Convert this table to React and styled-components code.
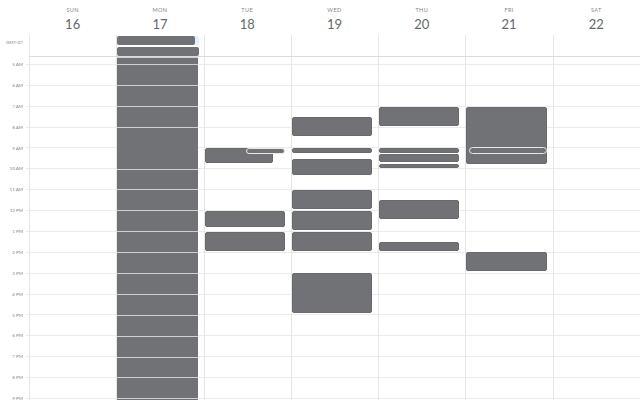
import React from 'react';
import styled, { createGlobalStyle } from 'styled-components';

const GlobalStyle = createGlobalStyle`
    html, body {
        margin: 0;
        padding: 0;
        background: #fff;
        font-family: Lato, "Liberation Sans", sans-serif;
    }
`;

const HOUR = 20.875;
const BODY_TOP = 57;
const FIRST_LINE = 7;

const days = [
    { name: 'SUN', date: 16 },
    { name: 'MON', date: 17 },
    { name: 'TUE', date: 18 },
    { name: 'WED', date: 19 },
    { name: 'THU', date: 20 },
    { name: 'FRI', date: 21 },
    { name: 'SAT', date: 22 },
];

const hours = ['5 AM', '6 AM', '7 AM', '8 AM', '9 AM', '10 AM', '11 AM', '12 PM', '1 PM', '2 PM',
    '3 PM', '4 PM', '5 PM', '6 PM', '7 PM', '8 PM', '9 PM'];

// monday is one long run of back to back events
const monBreaks = [57, 64, 85, 106, 127, 169, 189, 210, 231, 252, 273, 294, 315, 336, 357, 377, 398, 420];
const monEvents = monBreaks.slice(0, -1).map((y, i) => ({ top: y, bottom: monBreaks[i + 1], stacked: true }));

// page y coords of each event
const events = {
    MON: monEvents,
    TUE: [
        { top: 148, bottom: 162.5, right: 18 },
        { top: 147.5, bottom: 153.5, left: 41, right: 5.5, pill: true },
        { top: 210.5, bottom: 226.7 },
        { top: 231.7, bottom: 251.2 },
    ],
    WED: [
        { top: 116.7, bottom: 136 },
        { top: 148.3, bottom: 152.7 },
        { top: 158.7, bottom: 174.7 },
        { top: 190, bottom: 209 },
        { top: 210.7, bottom: 229.7 },
        { top: 231.7, bottom: 251.2 },
        { top: 273.3, bottom: 313.3 },
    ],
    THU: [
        { top: 106.7, bottom: 125.7 },
        { top: 148.3, bottom: 152.7 },
        { top: 154, bottom: 162.3 },
        { top: 163.7, bottom: 168 },
        { top: 200, bottom: 219.3 },
        { top: 242.3, bottom: 251 },
    ],
    FRI: [
        { top: 106.7, bottom: 164 },
        { top: 147.3, bottom: 153.7, left: 3, right: 5.5, pill: true },
        { top: 252.3, bottom: 271.5 },
    ],
};

const Page = styled.div`
    width: 640px;
    height: 400px;
    overflow: hidden;
    display: flex;
    flex-direction: column;
`;

const Header = styled.div`
    display: grid;
    grid-template-columns: 29px repeat(7, 1fr);
    height: 35px;
`;

const DayHead = styled.div`
    display: flex;
    flex-direction: column;
    align-items: center;
    padding-top: 7px;
`;

const DayName = styled.div`
    font-size: 5.5px;
    letter-spacing: 0.4px;
    line-height: 7px;
    color: #80868b;
`;

const DayDate = styled.div`
    font-size: 13px;
    line-height: 16px;
    margin-top: 2px;
    color: #63676c;
`;

const AllDayRow = styled.div`
    display: flex;
    height: 22px;
    flex: none;
`;

const Zone = styled.div`
    width: 29px;
    flex: none;
    font-size: 4.5px;
    line-height: 6px;
    color: #80868b;
    padding: 5px 0 0 6px;
    box-sizing: border-box;
    white-space: nowrap;
`;

const AllDayGrid = styled.div`
    flex: 1;
    display: grid;
    grid-template-columns: repeat(7, 1fr);
    border-bottom: 1px solid #dadce0;
    box-sizing: border-box;
`;

const AllDayCell = styled.div`
    border-left: 1px solid #e6e6e6;
    display: flex;
    flex-direction: column;
    gap: 2px;
    padding: 1px 5px 0 0;
`;

const AllDayEvent = styled.div`
    height: 9px;
    flex: none;
    background: #707276;
    border-radius: 2px;
    margin-right: ${p => p.$inset}px;
    box-shadow: ${p => p.$selected ? '4px 0 0 #e4f1fb' : 'none'};
`;

const Body = styled.div`
    flex: 1;
    display: grid;
    grid-template-columns: 29px repeat(7, 1fr);
    overflow: hidden;
    background-image: repeating-linear-gradient(to bottom, #ebebeb 0 1px, transparent 1px ${HOUR}px);
    background-position: 0 ${FIRST_LINE}px;
`;

const Gutter = styled.div`
    display: flex;
    flex-direction: column;
    padding-top: ${FIRST_LINE}px;
    background: linear-gradient(#fff, #fff) no-repeat;
    background-size: 26px 100%;
`;

const Slot = styled.div`
    height: ${HOUR}px;
    flex: none;
`;

const TimeLabel = styled.span`
    display: block;
    width: 23px;
    text-align: right;
    font-size: 4.5px;
    line-height: 0;
    color: #80868b;
    transform: translateY(0.5px);
`;

const DayCol = styled.div`
    position: relative;
    border-left: 1px solid #e6e6e6;
`;

const Event = styled.div`
    position: absolute;
    box-sizing: border-box;
    background: #707276;
    border-radius: ${p => p.$pill ? '4px' : p.$stacked ? '0' : '2px'};
    border-style: solid;
    border-color: ${p => p.$pill ? '#e8e8e8' : p.$stacked ? '#cfd0d2' : '#686a6e'};
    border-width: ${p => p.$stacked ? '1px 0 0 0' : '1px'};
`;

function CalendarEvent({ ev }) {
    const left = ev.left !== undefined ? ev.left : 0;
    const right = ev.right !== undefined ? ev.right : 6;
    return (
        <Event
            $pill={ev.pill}
            $stacked={ev.stacked}
            style={{
                top: ev.top - BODY_TOP,
                height: ev.bottom - ev.top,
                left,
                right,
            }}
        />
    );
}

const App = () => {
    return (
        <Page>
            <GlobalStyle />
            <Header>
                <div />
                {days.map(d => (
                    <DayHead key={d.name}>
                        <DayName>{d.name}</DayName>
                        <DayDate>{d.date}</DayDate>
                    </DayHead>
                ))}
            </Header>

            <AllDayRow>
                <Zone>GMT-07</Zone>
                <AllDayGrid>
                    {days.map(d => (
                        <AllDayCell key={d.name}>
                            {d.name === 'MON' ? (
                                <>
                                    <AllDayEvent $inset={4} $selected />
                                    <AllDayEvent $inset={0} />
                                </>
                            ) : null}
                        </AllDayCell>
                    ))}
                </AllDayGrid>
            </AllDayRow>

            <Body>
                <Gutter>
                    {hours.map(h => (
                        <Slot key={h}>
                            <TimeLabel>{h}</TimeLabel>
                        </Slot>
                    ))}
                </Gutter>
                {days.map(d => (
                    <DayCol key={d.name}>
                        {(events[d.name] || []).map((ev, i) => (
                            <CalendarEvent key={i} ev={ev} />
                        ))}
                    </DayCol>
                ))}
            </Body>
        </Page>
    );
};

export default App;
